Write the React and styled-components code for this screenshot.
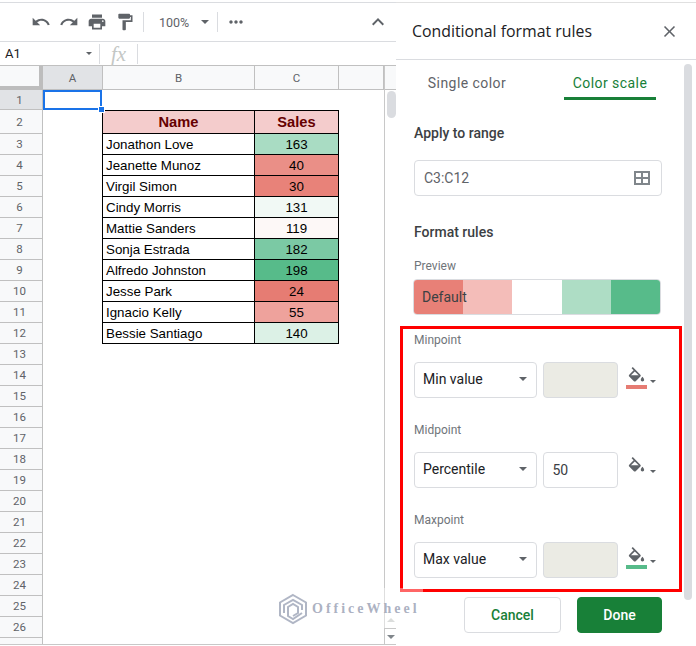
import React from 'react';
import styled, { createGlobalStyle } from 'styled-components';
import { MdUndo, MdRedo, MdPrint, MdFormatPaint, MdMoreHoriz, MdKeyboardArrowUp, MdClose } from 'react-icons/md';

const GlobalStyle = createGlobalStyle`
  html, body { margin: 0; padding: 0; background: #fff; }
  * { box-sizing: border-box; }
`;

const Page = styled.div`
  position: relative;
  width: 696px;
  height: 646px;
  overflow: hidden;
  display: flex;
  font-family: Roboto, sans-serif;
  color: #3c4043;
`;

const Left = styled.div`
  width: 396px;
  height: 646px;
  display: flex;
  flex-direction: column;
  padding-top: 2px;
`;

const Toolbar = styled.div`
  height: 40px;
  flex: none;
  display: flex;
  align-items: center;
  padding: 0 6px 0 27px;
  border-top: 1px solid #dadce0;
  border-bottom: 1px solid #dadce0;
  color: #5f6368;
`;

const ToolIcon = styled.span`
  width: 28px;
  height: 24px;
  display: flex;
  align-items: center;
  justify-content: center;
  font-size: 20px;
  color: #5f6368;
`;

const ToolSep = styled.span`
  width: 1px;
  height: 20px;
  background: #dadce0;
  margin: ${(p) => p.$margin};
`;

const Zoom = styled.span`
  font-size: 12.5px;
  width: 42px;
  color: #5f6368;
`;

const Caret = styled.span`
  width: 0;
  height: 0;
  flex: none;
  border-left: ${(p) => p.$size || 4}px solid transparent;
  border-right: ${(p) => p.$size || 4}px solid transparent;
  border-top: ${(p) => p.$size || 4}px solid #5f6368;
`;

const Collapse = styled.span`
  margin-left: auto;
  font-size: 24px;
  display: flex;
  color: #5f6368;
`;

const FormulaBar = styled.div`
  height: 24px;
  flex: none;
  display: flex;
  align-items: center;
  border-bottom: 1px solid #c0c0c0;
  padding-left: 5px;
`;

const NameBox = styled.span`
  font-size: 13px;
  color: #202124;
  width: 81px;
`;

const Fx = styled.span`
  font-family: 'Liberation Serif', serif;
  font-style: italic;
  font-size: 21px;
  line-height: 22px;
  color: #c4c7c5;
  width: 37px;
  text-align: center;
`;

const SheetArea = styled.div`
  flex: 1;
  min-height: 0;
  display: flex;
  border-bottom: 1px solid #c8c8c8;
  margin-bottom: 1px;
`;

const Sheet = styled.div`
  flex: 1;
  overflow: hidden;
`;

const Row = styled.div`
  display: flex;
  height: ${(p) => p.$h}px;
`;

const Corner = styled.div`
  width: 43px;
  flex: none;
  background: #f8f9fa;
  border-right: 4px solid #bdbdbd;
  border-bottom: 4px solid #bdbdbd;
`;

const ColHead = styled.div`
  width: ${(p) => p.$w}px;
  flex: ${(p) => (p.$w ? 'none' : 1)};
  display: flex;
  align-items: center;
  justify-content: center;
  font-size: 11.5px;
  color: #5f6368;
  background: ${(p) => (p.$active ? '#e1e3e6' : '#f8f9fa')};
  border-right: 1px solid #c0c0c0;
  border-bottom: 1px solid #c0c0c0;
`;

const RowHead = styled.div`
  width: 43px;
  flex: none;
  display: flex;
  align-items: center;
  justify-content: center;
  padding-right: 3px;
  font-size: 11.5px;
  color: #5f6368;
  background: ${(p) => (p.$active ? '#e1e3e6' : '#f8f9fa')};
  border-right: 1px solid #c0c0c0;
  border-bottom: 1px solid #c0c0c0;
`;

const EmptyCell = styled.div`
  width: 59px;
  flex: none;
  position: relative;
  border: ${(p) => (p.$selected ? '2px solid #1a73e8' : 'none')};
`;

const Handle = styled.span`
  position: absolute;
  right: -5px;
  bottom: -5px;
  width: 7px;
  height: 7px;
  background: #1a73e8;
  border: 1px solid #fff;
`;

const Cell = styled.div`
  flex: none;
  width: ${(p) => p.$w}px;
  display: flex;
  align-items: center;
  justify-content: ${(p) => (p.$center ? 'center' : 'flex-start')};
  padding-left: ${(p) => (p.$center ? 0 : 3)}px;
  font-family: 'Liberation Sans', Arial, sans-serif;
  font-size: ${(p) => (p.$head ? 14.67 : 13.33)}px;
  font-weight: ${(p) => (p.$head ? 700 : 400)};
  color: ${(p) => (p.$head ? '#660000' : '#000')};
  background: ${(p) => p.$bg || '#fff'};
  border-right: 1px solid #000;
  border-bottom: 1px solid #000;
  border-left: ${(p) => (p.$first ? '1px solid #000' : 'none')};
  border-top: ${(p) => (p.$head ? '1px solid #000' : 'none')};
`;

const ScrollColumn = styled.div`
  width: 12px;
  flex: none;
  display: flex;
  flex-direction: column;
  align-items: center;
  border-left: 1px solid #c8c8c8;
`;

const ScrollCorner = styled.div`
  height: 24px;
  width: 100%;
  flex: none;
  background: #f8f9fa;
  border-bottom: 1px solid #c0c0c0;
`;

const ScrollThumb = styled.div`
  width: 9px;
  height: 27px;
  margin-top: 1px;
  margin-left: 1px;
  border-radius: 5px;
  background: #dadce0;
`;

const ScrollArrow = styled.div`
  margin-top: ${(p) => p.$top}px;
  width: 0;
  height: 0;
  border-left: 4px solid transparent;
  border-right: 4px solid transparent;
  ${(p) => (p.$up ? 'border-bottom: 4px solid #c4c7c5;' : 'border-top: 4px solid #80868b;')}
`;

const ScrollRule = styled.div`
  width: 100%;
  height: 1px;
  margin-top: 6px;
  background: #c8c8c8;
`;

const Panel = styled.div`
  width: 300px;
  flex: none;
  height: 646px;
  position: relative;
  padding-top: 2px;
`;

const PanelHeader = styled.div`
  height: 58px;
  display: flex;
  align-items: center;
  justify-content: space-between;
  padding: 0 17px 0 16px;
  border-top: 1px solid #e0e0e0;
  border-bottom: 1px solid #dadce0;
`;

const PanelTitle = styled.div`
  font-family: 'Open Sans', sans-serif;
  font-size: 15.85px;
  color: #202124;
`;

const CloseIcon = styled.span`
  display: flex;
  font-size: 19px;
  color: #5f6368;
`;

const Tabs = styled.div`
  height: 40px;
  display: flex;
  gap: 51px;
  padding-left: 25px;
`;

const Tab = styled.div`
  width: 92px;
  height: 40px;
  padding-top: 14px;
  white-space: nowrap;
  display: flex;
  justify-content: center;
  font-size: 14px;
  letter-spacing: 0.45px;
  line-height: 18px;
  color: ${(p) => (p.$active ? '#188038' : '#5f6368')};
  border-bottom: 3px solid ${(p) => (p.$active ? '#188038' : 'transparent')};
`;

const PanelBody = styled.div`
  padding-left: 18px;
  width: 266px;
`;

const Heading = styled.div`
  font-size: 14px;
  font-weight: 500;
  line-height: 18px;
  color: #3c4043;
  margin-top: ${(p) => p.$top}px;
`;

const Caption = styled.div`
  font-size: 12px;
  line-height: 16px;
  color: #70757a;
  margin-top: ${(p) => p.$top}px;
`;

const RangeInput = styled.div`
  margin-top: 18px;
  height: 36px;
  width: 248px;
  display: flex;
  align-items: center;
  justify-content: space-between;
  padding: 0 10px 0 9px;
  font-size: 14px;
  color: #5f6368;
  border: 1px solid #dadce0;
  border-radius: 4px;
`;

const Preview = styled.div`
  margin: 5px 0 0 -1px;
  height: 36px;
  width: 248px;
  display: flex;
  position: relative;
  overflow: hidden;
  border: 1px solid #dadce0;
  border-radius: 4px;
`;

const Stop = styled.div`
  flex: 1;
  background: ${(p) => p.$bg};
`;

const PreviewText = styled.span`
  position: absolute;
  left: 8px;
  top: 9px;
  font-size: 14px;
  line-height: 16px;
  color: #3c4043;
`;

const PointRow = styled.div`
  margin-top: 14px;
  display: flex;
  align-items: flex-start;
`;

const Select = styled.div`
  width: 123px;
  height: 36px;
  display: flex;
  align-items: center;
  justify-content: space-between;
  padding: 0 9px 2px 8px;
  font-size: 14px;
  color: #202124;
  border: 1px solid #dadce0;
  border-radius: 4px;
`;

const ValueBox = styled.div`
  width: 76px;
  height: 36px;
  margin-left: 6px;
  display: flex;
  align-items: center;
  padding-left: 9px;
  font-size: 14px;
  color: #3c4043;
  background: ${(p) => (p.$disabled ? '#ebebe4' : '#fff')};
  border: 1px solid #dadce0;
  border-radius: 4px;
`;

const FillButton = styled.div`
  width: 36px;
  margin-left: 8px;
  padding-top: 5px;
  display: flex;
  align-items: flex-start;
  gap: 3px;
`;

const FillIcon = styled.div`
  width: 21px;
  flex: none;
  display: flex;
  flex-direction: column;
  align-items: center;
  gap: 3px;
`;

const FillBar = styled.div`
  height: 4px;
  width: 21px;
  background: ${(p) => p.$color || 'transparent'};
`;

const FillCaret = styled(Caret)`
  margin-top: 13px;
`;

const Footer = styled.div`
  margin-top: 19px;
  width: 248px;
  display: flex;
  justify-content: flex-end;
  gap: 16px;
`;

const Button = styled.div`
  width: ${(p) => p.$w}px;
  height: 36px;
  display: flex;
  align-items: center;
  justify-content: center;
  font-size: 14px;
  font-weight: 500;
  border-radius: 4px;
  color: ${(p) => (p.$primary ? '#fff' : '#188038')};
  background: ${(p) => (p.$primary ? '#188038' : '#fff')};
  border: 1px solid ${(p) => (p.$primary ? '#188038' : '#dadce0')};
`;

const PanelScroll = styled.div`
  position: absolute;
  right: 4px;
  top: 64px;
  width: 8px;
  height: 536px;
  border-radius: 4px;
  background: #dadce0;
`;

const Highlight = styled.div`
  position: absolute;
  left: 400px;
  top: 326px;
  width: 282px;
  height: 266px;
  border: 3px solid #ff0000;
`;

const Watermark = styled.div`
  position: absolute;
  left: 273px;
  top: 588px;
  width: 150px;
  height: 40px;
  display: flex;
  align-items: center;
  gap: 4px;
  padding: 2px 0 0 5px;
  background: rgba(255, 255, 255, 0.4);
`;

const WatermarkText = styled.span`
  font-family: 'Liberation Serif', serif;
  font-weight: 700;
  font-size: 14px;
  letter-spacing: 3px;
  white-space: nowrap;
  color: rgba(150, 157, 178, 0.8);
`;

const rowsData = [
  { name: 'Jonathon Love', sales: 163, bg: '#a9dcc3' },
  { name: 'Jeanette Munoz', sales: 40, bg: '#ea8f87' },
  { name: 'Virgil Simon', sales: 30, bg: '#e88279' },
  { name: 'Cindy Morris', sales: 131, bg: '#f1f9f5' },
  { name: 'Mattie Sanders', sales: 119, bg: '#fdf8f7' },
  { name: 'Sonja Estrada', sales: 182, bg: '#7bc9a4' },
  { name: 'Alfredo Johnston', sales: 198, bg: '#57bb8a' },
  { name: 'Jesse Park', sales: 24, bg: '#e67c73' },
  { name: 'Ignacio Kelly', sales: 55, bg: '#eea29c' },
  { name: 'Bessie Santiago', sales: 140, bg: '#dcf1e6' },
];

const emptyRows = Array.from({ length: 15 }, (_, i) => i + 13);

const PaintBucket = ({ color }) => (
  <FillIcon>
    <svg width="17" height="15" viewBox="2 0 20 17.500" style={{ display: 'block' }}>
      <path
        fill="#5f6368"
        d="M16.56 8.94L7.62 0 6.21 1.41l2.38 2.38-5.15 5.15c-.59.59-.59 1.54 0 2.12l5.5 5.500c.29.29.68.44 1.06.44s.77-.15 1.06-.44l5.5-5.500c.59-.58.59-1.53 0-2.11zM5.21 10L10 5.21 14.79 10H5.21zM19 11.500s-2 2.17-2 3.500c0 1.1.9 2 2 2s2-.9 2-2c0-1.33-2-3.500-2-3.500z"
      />
      <path fill="#5f6368" d="M5 10h10l-5 5z" />
    </svg>
    <FillBar $color={color} />
  </FillIcon>
);

const RangeIcon = () => (
  <svg width="18" height="16" viewBox="0 0 18 16">
    <path fill="none" stroke="#80868b" strokeWidth="2" d="M2 2h14v12H2zM9 2v12M2 8h14" />
  </svg>
);

const WatermarkLogo = () => (
  <svg width="30" height="32" viewBox="0 0 30 32" fill="none" stroke="rgba(150,157,178,0.75)" strokeWidth="2">
    <path d="M15 2l13 7.500v13L15 30 2 22.500v-13z" />
    <path d="M6 20v-8l9-5 9 5v5M24 20l-9 6-5-3v-9l5-3 5 3v6l-5 3" />
  </svg>
);

const Point = ({ label, top, type, value, color }) => (
  <>
    <Caption $top={top}>{label}</Caption>
    <PointRow>
      <Select>
        {type}
        <Caret />
      </Select>
      <ValueBox $disabled={!value}>{value}</ValueBox>
      <FillButton>
        <PaintBucket color={color} />
        <FillCaret $size={3} />
      </FillButton>
    </PointRow>
  </>
);

const App = () => (
  <Page>
    <GlobalStyle />
    <Left>
      <Toolbar>
        <ToolIcon><MdUndo /></ToolIcon>
        <ToolIcon><MdRedo /></ToolIcon>
        <ToolIcon><MdPrint /></ToolIcon>
        <ToolIcon><MdFormatPaint /></ToolIcon>
        <ToolSep $margin="0 15px 0 4px" />
        <Zoom>100%</Zoom>
        <Caret />
        <ToolSep $margin="0 4px 0 8px" />
        <ToolIcon><MdMoreHoriz /></ToolIcon>
        <Collapse><MdKeyboardArrowUp /></Collapse>
      </Toolbar>
      <FormulaBar>
        <NameBox>A1</NameBox>
        <Caret $size={3} />
        <ToolSep $margin="0 0 0 7px" />
        <Fx>fx</Fx>
        <ToolSep $margin="0" />
      </FormulaBar>
      <SheetArea>
        <Sheet>
          <Row $h={24}>
            <Corner />
            <ColHead $w={60} $active>A</ColHead>
            <ColHead $w={152}>B</ColHead>
            <ColHead $w={84}>C</ColHead>
            <ColHead>{''}</ColHead>
          </Row>
          <Row $h={20}>
            <RowHead $active>1</RowHead>
            <EmptyCell $selected><Handle /></EmptyCell>
          </Row>
          <Row $h={24}>
            <RowHead>2</RowHead>
            <EmptyCell />
            <Cell $w={153} $first $head $center $bg="#f4cccc">Name</Cell>
            <Cell $w={84} $head $center $bg="#f4cccc">Sales</Cell>
          </Row>
          {rowsData.map((r, i) => (
            <Row $h={21} key={r.name}>
              <RowHead>{i + 3}</RowHead>
              <EmptyCell />
              <Cell $w={153} $first>{r.name}</Cell>
              <Cell $w={84} $center $bg={r.bg}>{r.sales}</Cell>
            </Row>
          ))}
          {emptyRows.map((n) => (
            <Row $h={21} key={n}>
              <RowHead>{n}</RowHead>
            </Row>
          ))}
        </Sheet>
        <ScrollColumn>
          <ScrollCorner />
          <ScrollThumb />
          <ScrollArrow $up $top={500} />
          <ScrollRule />
          <ScrollArrow $top={6} />
        </ScrollColumn>
      </SheetArea>
    </Left>
    <Panel>
      <PanelHeader>
        <PanelTitle>Conditional format rules</PanelTitle>
        <CloseIcon><MdClose /></CloseIcon>
      </PanelHeader>
      <Tabs>
        <Tab>Single color</Tab>
        <Tab $active>Color scale</Tab>
      </Tabs>
      <PanelBody>
        <Heading $top={24}>Apply to range</Heading>
        <RangeInput>
          C3:C12
          <RangeIcon />
        </RangeInput>
        <Heading $top={27}>Format rules</Heading>
        <Caption $top={17}>Preview</Caption>
        <Preview>
          <Stop $bg="#e88077" />
          <Stop $bg="#f4bdb9" />
          <Stop $bg="#ffffff" />
          <Stop $bg="#aeddc5" />
          <Stop $bg="#57bb8a" />
          <PreviewText>Default</PreviewText>
        </Preview>
        <Point label="Minpoint" top={17} type="Min value" color="#e67c73" />
        <Point label="Midpoint" top={24} type="Percentile" value="50" />
        <Point label="Maxpoint" top={24} type="Max value" color="#57bb8a" />
        <Footer>
          <Button $w={97}>Cancel</Button>
          <Button $w={85} $primary>Done</Button>
        </Footer>
      </PanelBody>
      <PanelScroll />
    </Panel>
    <Highlight />
    <Watermark>
      <WatermarkLogo />
      <WatermarkText>OfficeWheel</WatermarkText>
    </Watermark>
  </Page>
);

export default App;
